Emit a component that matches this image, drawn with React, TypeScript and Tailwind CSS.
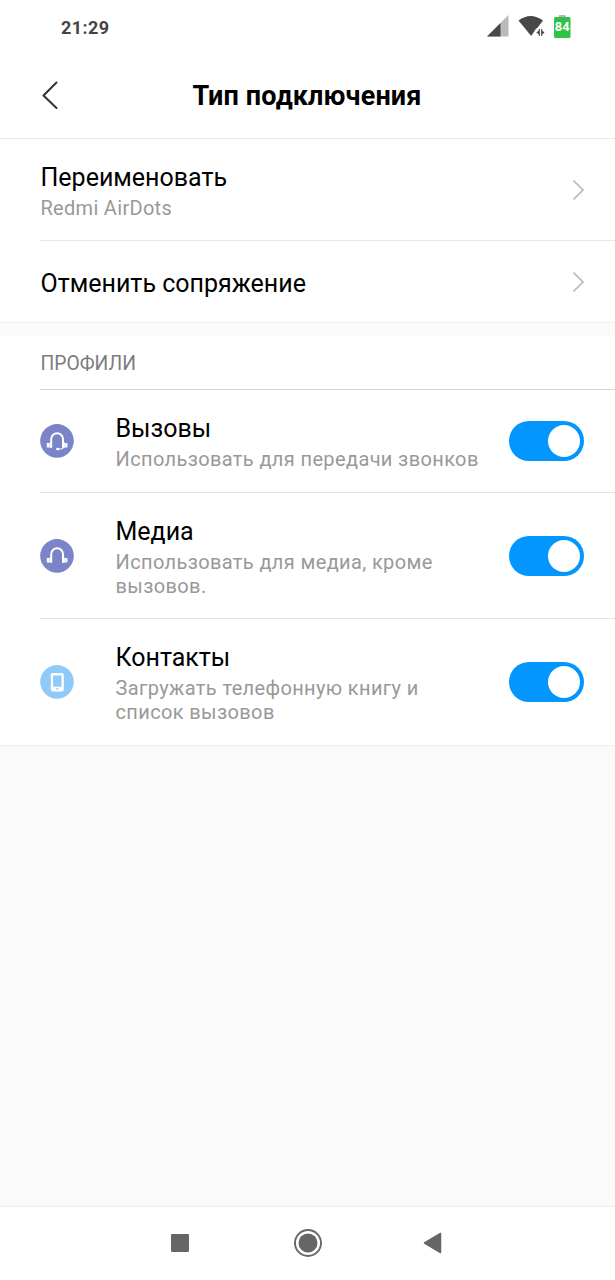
import React from 'react';

function Chevron() {
  return (
    <svg className="mr-[30px] h-[22px] w-[13px] shrink-0" viewBox="0 0 13 22" fill="none" stroke="#b8b8b8" strokeWidth="1.7">
      <path d="M1.5 1.5 11 11 1.5 20.5" />
    </svg>
  );
}

function Toggle() {
  return (
    <button role="switch" aria-checked="true" className="mr-[31px] flex h-10 w-[75px] shrink-0 items-center justify-end rounded-full bg-[#0496ff] pr-1">
      <span className="size-8 rounded-full bg-white" />
    </button>
  );
}

function HeadphonesIcon({ mic = false }: { mic?: boolean }) {
  return (
    <svg className="size-[34px] shrink-0" viewBox="0 0 34 34" fill="none">
      <circle cx="17" cy="16.9" r="16.8" fill="#7a84c7" />
      <path d="M11.2 23.8V15.1a5.8 5.7 0 0 1 11.8 0V23.8" stroke="#fff" strokeWidth="2" />
      <path d="M10 18.5v5.3M24.200 18.500v5.300" stroke="#fff" strokeWidth="1.400" />
      <path d="M7.900 19v4.600M26.300 19v4.600" stroke="#fff" strokeWidth="2.200" />
      {mic && (
        <>
          <path d="M24 23.500c-.8 1.400-2.500 1.600-6.200 1.600" stroke="#fff" strokeWidth="1" />
          <ellipse cx="17.800" cy="25.100" rx="1.800" ry="1.300" fill="#fff" />
        </>
      )}
    </svg>
  );
}

function PhoneIcon() {
  return (
    <svg className="size-[34px] shrink-0" viewBox="0 0 34 34">
      <circle cx="17" cy="16.9" r="16.8" fill="#90caf9" />
      <path fillRule="evenodd" fill="#fff" d="M12.600 8h9.400a1.800 1.800 0 0 1 1.800 1.800v14.800a1.800 1.800 0 0 1-1.800 1.800h-9.400a1.800 1.800 0 0 1-1.800-1.800V9.800a1.800 1.800 0 0 1 1.800-1.800zM13.100 10.400v11.400h8.400v-11.400zM16 23.300v1.300h2.600v-1.300z" />
    </svg>
  );
}

function Profile({ icon, title, lines, height, last = false }: { icon: React.ReactNode; title: string; lines: string[]; height: string; last?: boolean }) {
  return (
    <div className={`ml-10 flex items-center ${height} ${last ? '' : 'border-b border-[#e4e4e4]'}`}>
      {icon}
      <div className="ml-[41.5px] flex-1 pt-[3px] whitespace-nowrap">
        <div className="text-[25px] leading-[30px] text-black">{title}</div>
        <div className="mt-[3px] text-[20px] leading-6 tracking-[0.37px] text-[#999]">
          {lines.map((line) => (
            <div key={line}>{line}</div>
          ))}
        </div>
      </div>
      <Toggle />
    </div>
  );
}

export default function App() {
  return (
    <div className="flex h-[1280px] w-[615px] flex-col overflow-hidden bg-[#fafafa] font-['Roboto','Noto_Sans',sans-serif] text-black">
      <div className="flex h-[54px] shrink-0 items-center justify-between bg-white pr-[44px] pl-[61px]">
        <span className="pt-0.5 text-[18px] leading-6 font-bold tracking-[0.4px] text-[#444]">21:29</span>
        <svg className="h-[30px] w-[86px]" viewBox="485 12 86 30">
          <path d="M508.500 15v21.500h-21.500z" fill="#bababa" />
          <path d="M500.500 23v13.500h-13.500z" fill="#484848" />
          <path d="M518.500 20.500q12-9 24.500 0l-5.500 7.200-1.500 1-4.800 7.300z" fill="#484848" />
          <path d="M539.300 29v7M541.700 29v7" stroke="#484848" strokeWidth="1.100" />
          <path d="M539 30.500v4l-2.700-2zM542 30.500v4l2.500-2z" fill="#484848" />
          <rect x="558.700" y="15" width="7" height="3" rx="1" fill="#b5b5b5" />
          <rect x="554" y="17" width="16.500" height="21" rx="1.500" fill="#2fc14a" />
          <text x="562.200" y="31.400" textAnchor="middle" fontSize="12.800" fontWeight="700" fill="#fff">84</text>
        </svg>
      </div>
      <header className="flex h-[85px] shrink-0 items-center border-b border-[#e8e8e8] bg-white pl-[41px]">
        <svg className="mb-[3px] h-7 w-[18px]" viewBox="0 0 18 28" fill="none" stroke="#333" strokeWidth="2" strokeLinecap="round" strokeLinejoin="round">
          <path d="M15.500 1.500 2.500 14.500l13 12.500" />
        </svg>
        <h1 className="mr-[60px] flex-1 text-center text-[27px] leading-8 font-bold tracking-[0.15px]">Тип подключения</h1>
      </header>
      <section className="shrink-0 border-b border-[#efefef] bg-white pl-10">
        <div className="flex h-[102px] items-center justify-between border-b border-[#e8e8e8]">
          <div className="pt-[3px] pl-[0.5px]">
            <div className="text-[25px] leading-[30px]">Переименовать</div>
            <div className="mt-[3px] text-[20px] leading-6 tracking-[0.3px] text-[#999]">Redmi AirDots</div>
          </div>
          <Chevron />
        </div>
        <div className="flex h-[81px] items-center justify-between">
          <div className="pt-1 pl-[0.5px] text-[25px] leading-[30px]">Отменить сопряжение</div>
          <Chevron />
        </div>
      </section>
      <section className="mt-[13px] shrink-0 border-b border-[#efefef] bg-white">
        <h2 className="ml-10 flex h-[54px] items-center border-b border-[#d6d6d6] pt-[3px] pl-[0.5px] text-[19.3px] leading-6 text-[#7c7c7c]">ПРОФИЛИ</h2>
        <Profile icon={<HeadphonesIcon mic />} title="Вызовы" lines={['Использовать для передачи звонков']} height="h-[103px]" />
        <Profile icon={<HeadphonesIcon />} title="Медиа" lines={['Использовать для медиа, кроме', 'вызовов.']} height="h-[126px]" />
        <Profile icon={<PhoneIcon />} title="Контакты" lines={['Загружать телефонную книгу и', 'список вызовов']} height="h-[126px]" last />
      </section>
      <nav className="mt-auto flex h-[74px] shrink-0 items-center justify-between border-t border-[#ededed] bg-white pr-[173px] pb-0.5 pl-[171px]">
        <div className="size-[18px] rounded-[1px] bg-[#666]" />
        <svg className="ml-[4px] size-7" viewBox="0 0 28 28">
          <circle cx="14" cy="14" r="13" fill="none" stroke="#666" strokeWidth="1.900" />
          <circle cx="14" cy="14" r="9.500" fill="#666" />
        </svg>
        <svg className="h-[22px] w-[19px]" viewBox="0 0 19 22">
          <path d="M1.500 11 17.500 1.500v19z" fill="#666" stroke="#666" strokeWidth="1.500" strokeLinejoin="round" />
        </svg>
      </nav>
    </div>
  );
}
